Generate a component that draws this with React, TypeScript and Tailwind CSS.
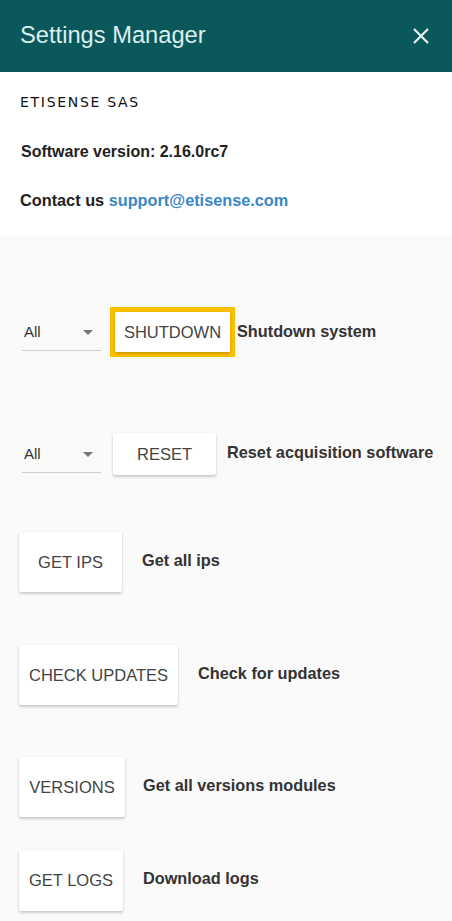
import React from "react";

function Select() {
  return (
    <div className="ml-[22px] w-[79px] h-[36px] flex items-center justify-between border-b border-[#cfcfcf] pl-[2px] pr-[8px] mt-[2px]">
      <span className="text-[15px] text-[#333]">All</span>
      <svg width="10" height="5" viewBox="0 0 10 5"><path d="M0 0 L10 0 L5 5 Z" fill="#757575" /></svg>
    </div>
  );
}

function Btn({ label, w, h }: { label: string; w: string; h: string }) {
  return (
    <div
      className={`${w} ${h} bg-white flex items-center justify-center text-[16.5px] text-[#444] rounded-[2px] shadow-[0_2px_3px_rgba(0,0,0,0.18),0_0_2px_rgba(0,0,0,0.08)]`}
    >
      {label}
    </div>
  );
}

function Desc({ children, ml }: { children: React.ReactNode; ml: string }) {
  return <span className={`${ml} text-[16.3px] font-bold text-[#333]`}>{children}</span>;
}

export default function App() {
  return (
    <div className="w-[452px] h-[921px] overflow-hidden bg-[#fafafa] font-['Liberation_Sans',Arial,sans-serif]">
      <div className="h-[72px] bg-[#0b585c] flex items-center justify-between pl-[20px] pr-[22px]">
        <span className="text-[23.7px] text-[#dcefee]">Settings Manager</span>
        <svg width="18" height="18" viewBox="0 0 18 18">
          <path d="M2 2 L16 16 M16 2 L2 16" stroke="#e6f2f2" strokeWidth="2.2" />
        </svg>
      </div>
      <div className="h-[164px] bg-white pl-[20px] pt-[20px]">
        <div className="h-[20px] flex items-center text-[14px] tracking-[1.7px] text-[#111] font-['DejaVu_Sans',sans-serif]">
          ETISENSE SAS
        </div>
        <div className="mt-[30px] h-[20px] flex items-center text-[16px] font-bold text-[#222] pl-[1px]">
          Software version: 2.16.0rc7
        </div>
        <div className="mt-[28px] h-[20px] flex items-center text-[16.3px] font-bold text-[#222]">
          Contact us&nbsp;<span className="text-[#3a87c9]">support@etisense.com</span>
        </div>
      </div>

      <div className="flex flex-col">
        <div className="mt-[71px] h-[50px] flex items-center">
          <Select />
          <div className="ml-[9px] border-[5px] border-[#fbbf00] bg-white">
            <Btn label="SHUTDOWN" w="w-[115px]" h="h-[40px]" />
          </div>
          <Desc ml="ml-[2px] -mt-[2px]">Shutdown system</Desc>
        </div>

        <div className="mt-[76px] h-[42px] flex items-center">
          <Select />
          <div className="ml-[12px]">
            <Btn label="RESET" w="w-[103px]" h="h-[42px]" />
          </div>
          <Desc ml="ml-[11px] -mt-[4px]">Reset acquisition software</Desc>
        </div>

        <div className="mt-[57px] h-[60px] flex items-center pl-[19px]">
          <Btn label="GET IPS" w="w-[103px]" h="h-[60px]" />
          <Desc ml="ml-[20px] -mt-[4px]">Get all ips</Desc>
        </div>

        <div className="mt-[53px] h-[60px] flex items-center pl-[19px]">
          <Btn label="CHECK UPDATES" w="w-[159px]" h="h-[60px]" />
          <Desc ml="ml-[20px] -mt-[4px]">Check for updates</Desc>
        </div>

        <div className="mt-[52px] h-[60px] flex items-center pl-[19px]">
          <Btn label="VERSIONS" w="w-[106px]" h="h-[60px]" />
          <Desc ml="ml-[18px] -mt-[4px]">Get all versions modules</Desc>
        </div>

        <div className="mt-[33px] h-[61px] flex items-center pl-[19px]">
          <Btn label="GET LOGS" w="w-[104px]" h="h-[61px]" />
          <Desc ml="ml-[20px] -mt-[4px]">Download logs</Desc>
        </div>
      </div>
    </div>
  );
}
